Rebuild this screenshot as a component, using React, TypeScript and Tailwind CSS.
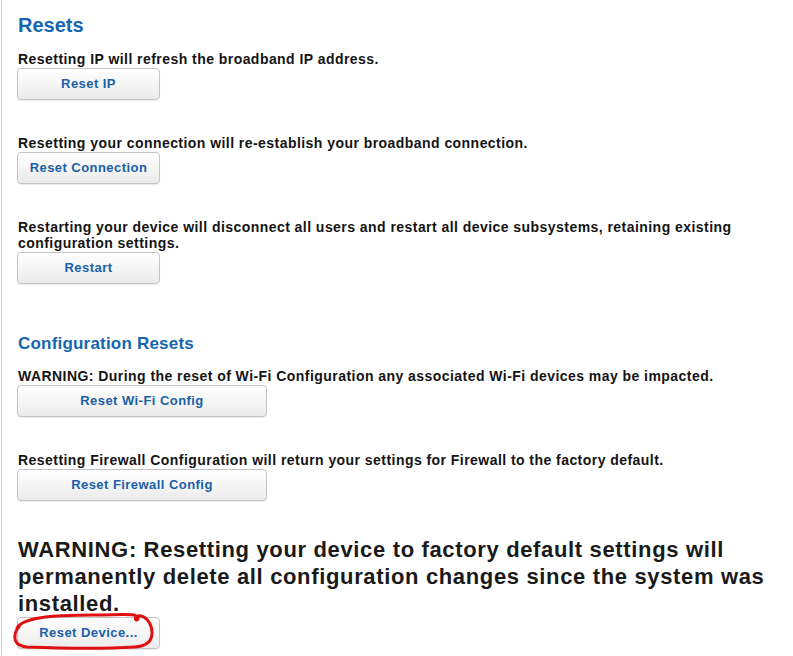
import React from 'react';

type BtnProps = { label: string; wide?: boolean };

const ResetButton: React.FC<BtnProps> = ({ label, wide }) => (
  <button
    type="button"
    className={
      (wide ? 'w-[250px] ' : 'w-[143px] ') +
      '-ml-px block h-[32px] rounded-[4px] border border-[#c4c4c4] bg-gradient-to-b from-white to-[#ebebeb] text-[13px] font-bold tracking-[0.45px] text-[#1a5fa8] shadow-[0_1px_1px_rgba(0,0,0,0.08)]'
    }
  >
    {label}
  </button>
);

const Para: React.FC<{ children: React.ReactNode }> = ({ children }) => (
  <p className="text-[14px] font-bold leading-[16px] tracking-[0.45px] text-[#141414]">{children}</p>
);

export default function App() {
  return (
    <div className="min-h-[656px] bg-white font-['Liberation_Sans',Arial,sans-serif]">
      <div className="ml-[1px] min-h-[656px] border-l border-[#d0d0d0] pl-[16px] pt-[13px]">
        {/* Resets */}
        <h2 className="text-[20px] font-bold leading-[24px] text-[#1466b0]">Resets</h2>

        <div className="mt-[14px]">
          <Para>Resetting IP will refresh the broadband IP address.</Para>
          <div className="mt-px">
            <ResetButton label="Reset IP" />
          </div>
        </div>

        <div className="mt-[35px]">
          <Para>Resetting your connection will re-establish your broadband connection.</Para>
          <div className="mt-px">
            <ResetButton label="Reset Connection" />
          </div>
        </div>

        <div className="mt-[35px]">
          <Para>
            Restarting your device will disconnect all users and restart all device subsystems, retaining existing
            <br />
            configuration settings.
          </Para>
          <div className="mt-px">
            <ResetButton label="Restart" />
          </div>
        </div>

        {/* Configuration Resets */}
        <h2 className="mt-[50px] text-[17px] font-bold leading-[20px] tracking-[0.2px] text-[#1466b0]">
          Configuration Resets
        </h2>

        <div className="mt-[14px]">
          <Para>WARNING: During the reset of Wi-Fi Configuration any associated Wi-Fi devices may be impacted.</Para>
          <div className="mt-px">
            <ResetButton label="Reset Wi-Fi Config" wide />
          </div>
        </div>

        <div className="mt-[35px]">
          <Para>Resetting Firewall Configuration will return your settings for Firewall to the factory default.</Para>
          <div className="mt-px">
            <ResetButton label="Reset Firewall Config" wide />
          </div>
        </div>

        <div className="mt-[35px]">
          <p className="text-[22px] font-bold leading-[27px] tracking-[0.65px] text-[#1a1a1a]">
            WARNING: Resetting your device to factory default settings will
            <br />
            permanently delete all configuration changes since the system was
            <br />
            installed.
          </p>
          <div className="relative w-[143px]">
            <ResetButton label="Reset Device..." />
            {/* red hand-drawn highlight */}
            <svg
              className="pointer-events-none absolute left-[-5px] top-[-5px]"
              width="142"
              height="38"
              viewBox="0 0 142 38"
              fill="none"
            >
              <path
                d="M4 16 C 10 6, 36 3, 80 3 C 100 3, 112 2, 121 3 C 125 4, 126 7, 124 8 C 121 8, 122 3, 128 4 C 135 6, 139 13, 139 21 C 139 29, 134 34, 122 35 C 90 37, 40 36, 14 35 C 5 34, 1 30, 2 24 C 2 20, 3 18, 6 15"
                stroke="#e01010"
                strokeWidth="3"
                strokeLinecap="round"
                strokeLinejoin="round"
              />
            </svg>
          </div>
        </div>
      </div>
    </div>
  );
}
